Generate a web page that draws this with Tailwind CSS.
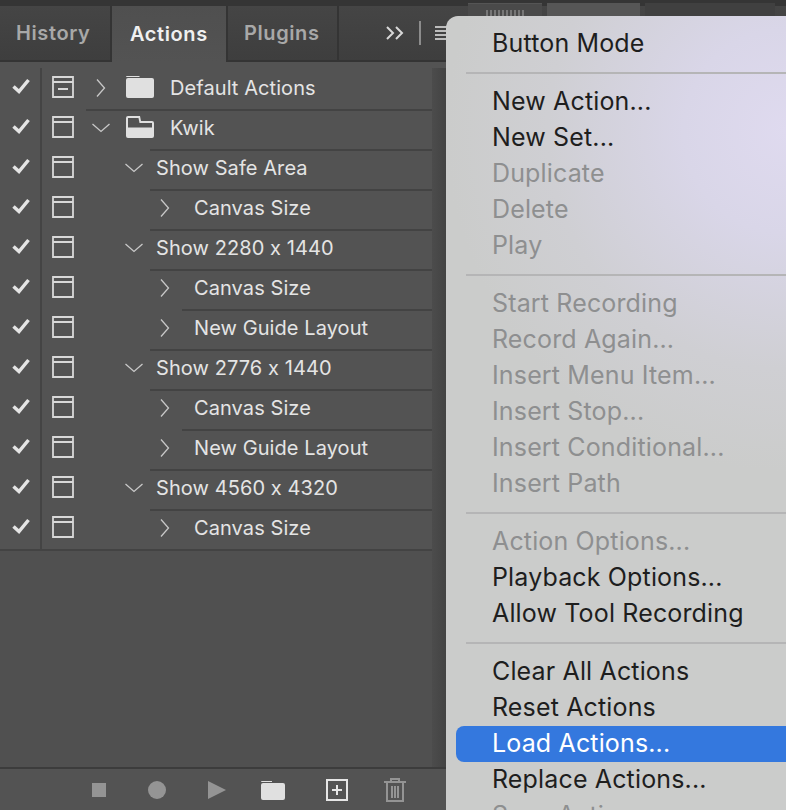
<!DOCTYPE html>
<html lang="en">
<head>
  <meta charset="UTF-8" />
  <title>Actions panel</title>
  <script src="https://cdn.jsdelivr.net/npm/@tailwindcss/browser@4"></script>
</head>
<body class="bg-[#535353]">
<svg class="hidden">
  <symbol id="check" viewBox="0 0 20 20"><path d="M2.5 10.5 L8 15.5 L17.500 4" fill="none" stroke="currentColor" stroke-width="3.500"/></symbol>
  <symbol id="box" viewBox="0 0 22 22"><path d="M1 1h20v20H1z M1 6h20" fill="none" stroke="currentColor" stroke-width="1.800"/></symbol>
  <symbol id="boxminus" viewBox="0 0 22 22"><path d="M1 1h20v20H1z M1 6h20 M6 13h10" fill="none" stroke="currentColor" stroke-width="1.800"/></symbol>
  <symbol id="right" viewBox="0 0 10 18"><path d="M1 0.500 L8.500 9 L1 17.500" fill="none" stroke="currentColor" stroke-width="1.300"/></symbol>
  <symbol id="down" viewBox="0 0 18 10"><path d="M0.500 1 L9 8.500 L17.500 1" fill="none" stroke="currentColor" stroke-width="1.300"/></symbol>
</svg>

<div class="relative w-[786px] h-[810px] overflow-hidden bg-[#535353] flex flex-col font-['Inter','Liberation_Sans',sans-serif] [font-feature-settings:'calt'_0]">
  <!-- tabs -->
  <div class="h-[6px] bg-[#353535] shrink-0"></div>
  <div class="h-[56px] shrink-0 flex bg-gradient-to-b from-[#454545] to-[#3e3e3e] border-b-[2px] border-[#343434]">
    <div class="w-[112px] flex items-center pl-[16px] border-r-[2px] border-[#343434] text-[20px] font-semibold tracking-[0.6px] text-[#a8a8a8]">History</div>
    <div class="w-[114px] -mb-[2px] flex items-center pl-[18px] bg-gradient-to-b from-[#4f4f4f] to-[#535353] text-[20px] font-semibold tracking-[0.6px] text-[#f0f0f0]"><span>Actions</span></div>
    <div class="w-[113px] flex items-center pl-[16px] border-x-[2px] border-[#343434] text-[20px] font-semibold tracking-[0.6px] text-[#a8a8a8]">Plugins</div>
    <div class="flex items-center ml-[47px] gap-[14px] text-[#d8d8d8]">
      <svg width="19" height="14" viewBox="0 0 19 14" fill="none" stroke="currentColor" stroke-width="2"><path d="M1 1l6 6-6 6M10 1l6 6-6 6"/></svg>
      <div class="w-[2px] h-[24px] bg-[#8c8c8c]"></div>
      <svg width="14" height="14" viewBox="0 0 14 14" fill="currentColor" class="text-[#bdbdbd]"><path d="M0 0h14v2H0zM0 4h14v2H0zM0 8h14v2H0zM0 12h14v2H0z"/></svg>
    </div>
  </div>

  <!-- list -->
  <div class="flex-1 flex">
    <div class="w-[432px] bg-[#505050]">
      <div class="h-[8px] bg-[#535353]"></div>
      <ul id="rows"></ul>
    </div>
    <div class="w-[14px] mt-[6px] bg-gradient-to-r from-[#4c4c4c] to-[#434343]"></div>
  </div>

  <!-- footer -->
  <div class="h-[43px] shrink-0 border-t-[2px] border-[#3c3c3c] bg-[#535353] flex items-center pl-[92px] text-[#949494]">
    <div class="w-[14px] h-[14px] bg-current"></div>
    <div class="w-[18px] h-[18px] rounded-full bg-current ml-[42px]"></div>
    <svg class="ml-[42px]" width="18" height="18" viewBox="0 0 18 18" fill="currentColor"><path d="M0 0L18 9L0 18z"/></svg>
    <svg class="ml-[35px] text-[#e0e0e0]" width="24" height="21" viewBox="0 0 24 21" fill="currentColor"><path d="M0 3a1 1 0 0 1 1-1h10v1H1zM0 6a2 2 0 0 1 2-2h20a2 2 0 0 1 2 2v13a2 2 0 0 1-2 2H2a2 2 0 0 1-2-2z"/></svg>
    <svg class="ml-[41px] text-[#e6e6e6]" width="22" height="22" viewBox="0 0 22 22" fill="none" stroke="currentColor" stroke-width="2"><path d="M1 1h20v20H1zM11 6v10M6 11h10"/></svg>
    <svg class="ml-[36px]" width="22" height="24" viewBox="0 0 22 24" fill="none" stroke="currentColor" stroke-width="2"><path d="M0 4h22M7 4V1h8v3M3 4v19h16V4M8 8v12M11 8v12M14 8v12"/></svg>
  </div>

  <!-- panels behind the menu -->
  <div class="absolute left-[468px] top-[3px] h-[20px] flex gap-[5px]">
    <div class="w-[74px] bg-[#4a4a4a] border-t border-[#555] flex justify-center pt-[6px]">
      <div class="w-[38px] h-[6px] bg-[repeating-linear-gradient(90deg,#777_0_2px,transparent_2px_4px)]"></div>
    </div>
    <div class="w-[93px] bg-[#565656]"></div>
    <div class="w-[130px] bg-[#404040]"></div>
  </div>

  <!-- flyout menu -->
  <div id="menu" class="absolute left-[446px] top-[16px] w-[360px] h-[820px] rounded-tl-[12px] pt-[9px] text-[25px] leading-[36px] tracking-[0.15px] text-[#1e1e1e] bg-[#cbcccb] bg-[radial-gradient(circle_340px_at_340px_115px,#dfdaef_0%,#d9d6e8_30%,#cfcfd3_70%,#cbcccb_100%)]"></div>
</div>

<script>
  const rows = [
    {icon:"boxminus", set:"closed", label:"Default Actions", line:"ml-[86px]"},
    {set:"open", label:"Kwik", line:"ml-[150px]"},
    {label:"Show Safe Area", line:"ml-[150px]"},
    {step:1, label:"Canvas Size", line:"ml-[150px]"},
    {label:"Show 2280 x 1440", line:"ml-[150px]"},
    {step:1, label:"Canvas Size", line:"ml-[182px]"},
    {step:1, label:"New Guide Layout", line:"ml-[150px]"},
    {label:"Show 2776 x 1440", line:"ml-[150px]"},
    {step:1, label:"Canvas Size", line:"ml-[182px]"},
    {step:1, label:"New Guide Layout", line:"ml-[150px]"},
    {label:"Show 4560 x 4320", line:"ml-[150px]"},
    {step:1, label:"Canvas Size", line:"ml-0"},
  ];

  const folderClosed = `<svg class="absolute left-[126px] top-[6px] text-[#e0e0e0]" width="28" height="22" viewBox="0 0 28 22" fill="currentColor"><path d="M0 1a1 1 0 0 1 1-1h12l1 1H0zM0 4a2 2 0 0 1 2-2h24a2 2 0 0 1 2 2v16a2 2 0 0 1-2 2H2a2 2 0 0 1-2-2z"/></svg>`;
  const folderOpen = `<svg class="absolute left-[126px] top-[6px] text-[#e0e0e0]" width="28" height="22" viewBox="0 0 28 22" fill="currentColor"><path fill-rule="evenodd" d="M2 0h12l1 5h11a2 2 0 0 1 2 2v13a2 2 0 0 1-2 2H2a2 2 0 0 1-2-2V2a2 2 0 0 1 2-2zM2 2v9.500h24V7H13.500l-1-5z"/></svg>`;

  document.getElementById("rows").innerHTML = rows.map((r, i) => {
    let chev, text;
    if (r.set) {
      chev = r.set === "closed"
        ? `<svg class="absolute left-[96px] top-[9px] text-[#c8c8c8]" width="10" height="18"><use href="#right"/></svg>` + folderClosed
        : `<svg class="absolute left-[92px] top-[13px] text-[#c8c8c8]" width="18" height="10"><use href="#down"/></svg>` + folderOpen;
      text = `<span class="absolute left-[170px] top-0 leading-[36px]">${r.label}</span>`;
    } else if (r.step) {
      chev = `<svg class="absolute left-[160px] top-[9px] text-[#c8c8c8]" width="10" height="18"><use href="#right"/></svg>`;
      text = `<span class="absolute left-[194px] top-0 leading-[36px]">${r.label}</span>`;
    } else {
      chev = `<svg class="absolute left-[125px] top-[13px] text-[#c8c8c8]" width="18" height="10"><use href="#down"/></svg>`;
      text = `<span class="absolute left-[156px] top-0 leading-[36px]">${r.label}</span>`;
    }
    return `<li class="relative h-[40px] bg-[#535353] text-[20px] tracking-[0.08px] text-[#e4e4e4]">
      <div class="absolute left-[40px] -top-[2px] bottom-0 w-[2px] bg-[#444444]"></div>
      <svg class="absolute left-[11px] top-[6px] text-[#e4e4e4]" width="20" height="20"><use href="#check"/></svg>
      <svg class="absolute left-[52px] top-[6px] text-[#d8d8d8]" width="22" height="22"><use href="#${r.icon || "box"}"/></svg>
      ${chev}${text}
      <div class="absolute -bottom-[1px] left-0 right-0 h-[2px] z-10"><div class="${r.line} h-full bg-[#434343]"></div></div>
    </li>`;
  }).join("");

  const sep = "sep";
  const menu = [
    ["Button Mode"], sep,
    ["New Action..."], ["New Set..."], ["Duplicate",1], ["Delete",1], ["Play",1], sep,
    ["Start Recording",1], ["Record Again...",1], ["Insert Menu Item...",1], ["Insert Stop...",1], ["Insert Conditional...",1], ["Insert Path",1], sep,
    ["Action Options...",1], ["Playback Options..."], ["Allow Tool Recording"], sep,
    ["Clear All Actions"], ["Reset Actions"], ["Load Actions...",2], ["Replace Actions..."], ["Save Actions...",1],
  ];
  document.getElementById("menu").innerHTML = menu.map(m => {
    if (m === sep) return `<div class="ml-[20px] mt-[11px] mb-[9px] h-[2px] bg-[#b5b5b6]"></div>`;
    if (m[1] === 2) return `<div class="relative top-[1px] ml-[10px] pl-[36px] h-[36px] leading-[34px] rounded-l-[8px] bg-[#3478de] text-white">${m[0]}</div>`;
    return `<div class="pl-[46px] h-[36px] ${m[1] ? "text-[#8e8f90]" : ""}">${m[0]}</div>`;
  }).join("");
</script>
</body>
</html>
